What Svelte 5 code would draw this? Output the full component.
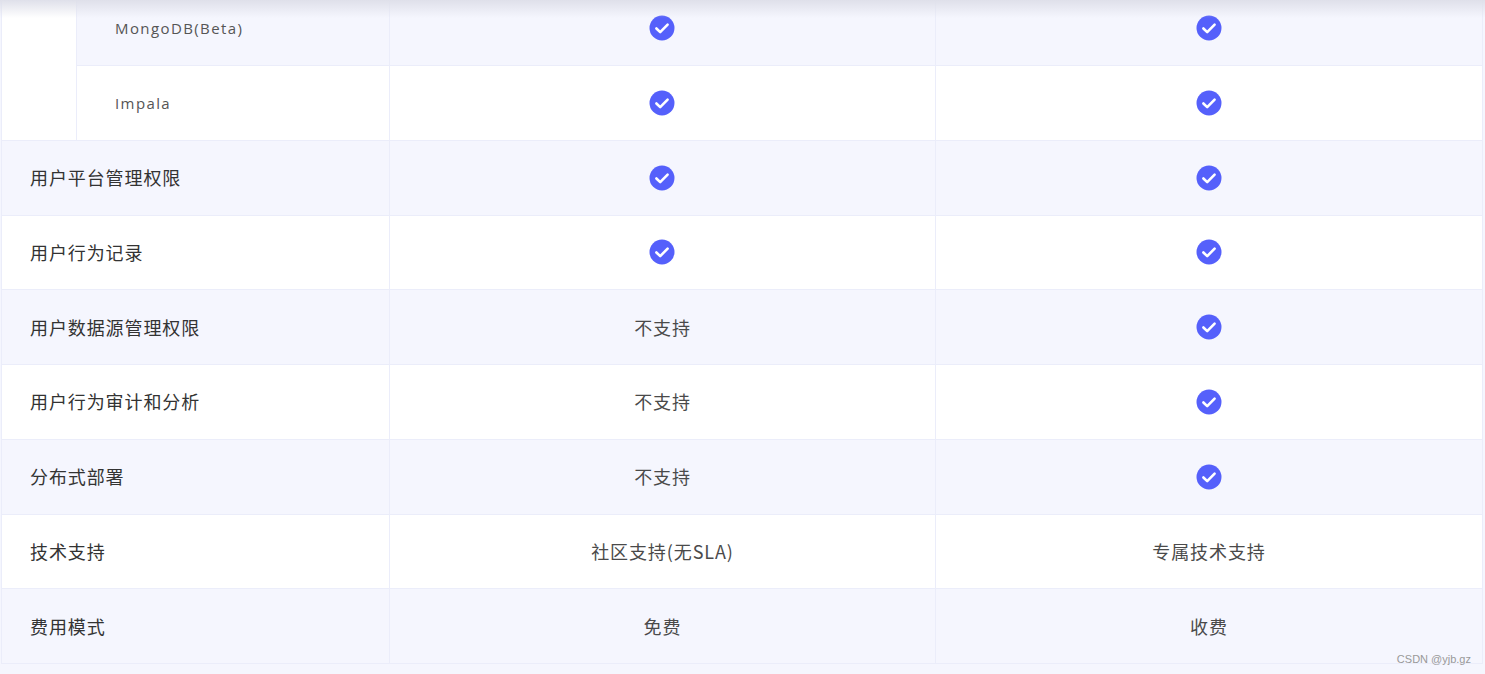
<script>
const check = Symbol("check");
const dbRows = [
	{ name: "MongoDB(Beta)", alt: true },
	{ name: "Impala", alt: false }
];
const rows = [
	{ name: "用户平台管理权限", a: check, b: check },
	{ name: "用户行为记录", a: check, b: check },
	{ name: "用户数据源管理权限", a: "不支持", b: check },
	{ name: "用户行为审计和分析", a: "不支持", b: check },
	{ name: "分布式部署", a: "不支持", b: check },
	{ name: "技术支持", a: "社区支持(无SLA)", b: "专属技术支持" },
	{ name: "费用模式", a: "免费", b: "收费" }
];
</script>

{#snippet value(v)}
	{#if v === check}
		<svg class="check" width="26" height="26" viewBox="0 0 26 26" aria-hidden="true">
			<circle cx="13" cy="13" r="12.5" fill="#5560fb" />
			<path d="M7.4 13.5l3.8 3.6 7.4-7.4" fill="none" stroke="#fff" stroke-width="2.6" stroke-linecap="round" stroke-linejoin="round" />
		</svg>
	{:else}
		<span class="text">{v}</span>
	{/if}
{/snippet}

<div class="page">
	<div class="shadow"></div>
	<div class="table">
		<div class="group">
			<div class="spacer"></div>
			<div class="group-rows">
				{#each dbRows as row}
					<div class="row sub" class:alt={row.alt}>
						<div class="cell name">{row.name}</div>
						<div class="cell mid">{@render value(check)}</div>
						<div class="cell last">{@render value(check)}</div>
					</div>
				{/each}
			</div>
		</div>
		{#each rows as row, i}
			<div class="row" class:alt={i % 2 === 0}>
				<div class="cell title"><span class="text">{row.name}</span></div>
				<div class="cell mid">{@render value(row.a)}</div>
				<div class="cell last">{@render value(row.b)}</div>
			</div>
		{/each}
	</div>
	<div class="mark">CSDN @yjb.gz</div>
</div>

<style>
:global(body) {
	margin: 0;
	background: #f5f6fe;
}

.page {
	position: relative;
	height: 674px;
	overflow: hidden;
	background: #f5f6fe;
	font-family: "Noto Sans CJK SC", "Liberation Sans", sans-serif;
	color: #444;
}

.shadow {
	position: absolute;
	left: 0;
	right: 0;
	top: 0;
	height: 18px;
	background: linear-gradient(#dfe0ea, rgba(240, 241, 250, 0));
	z-index: 2;
}

.table {
	width: 1482px;
	margin-top: -8.75px;
	margin-left: 1px;
	border-left: 1px solid #ebedfa;
	border-right: 1px solid #ebedfa;
	box-sizing: border-box;
	background: #fff;
}

.group {
	display: flex;
}

.spacer {
	width: 74px;
	flex: none;
	border-right: 1px solid #ebedfa;
	border-bottom: 1px solid #ebedfa;
}

.group-rows {
	flex: 1;
}

.row {
	display: grid;
	grid-template-columns: 387px 547px 1fr;
	height: 74.75px;
	box-sizing: border-box;
	border-bottom: 1px solid #ebedfa;
	background: #fff;
}

.row.sub {
	grid-template-columns: 312px 547px 1fr;
}

.row.alt {
	background: #f5f6fe;
}

.cell {
	display: flex;
	align-items: center;
	justify-content: center;
	font-size: 18px;
	letter-spacing: 0.9px;
	color: #4a4a4a;
}

.text {
	margin-bottom: 1px;
}

.mid {
	border-left: 1px solid #ebedfa;
	border-right: 1px solid #ebedfa;
}

.mid .check {
	margin-right: 1px;
}

.title {
	justify-content: flex-start;
	padding-left: 28px;
	color: #333;
}

.name {
	justify-content: flex-start;
	padding-left: 38px;
	font-family: "Open Sans", "Liberation Sans", sans-serif;
	font-size: 15px;
	letter-spacing: 1.4px;
	color: #555;
}

.check {
	display: block;
}

.mark {
	position: absolute;
	right: 14px;
	bottom: 9px;
	font-family: "Liberation Sans", sans-serif;
	font-size: 11px;
	color: #999;
	z-index: 3;
}
</style>
